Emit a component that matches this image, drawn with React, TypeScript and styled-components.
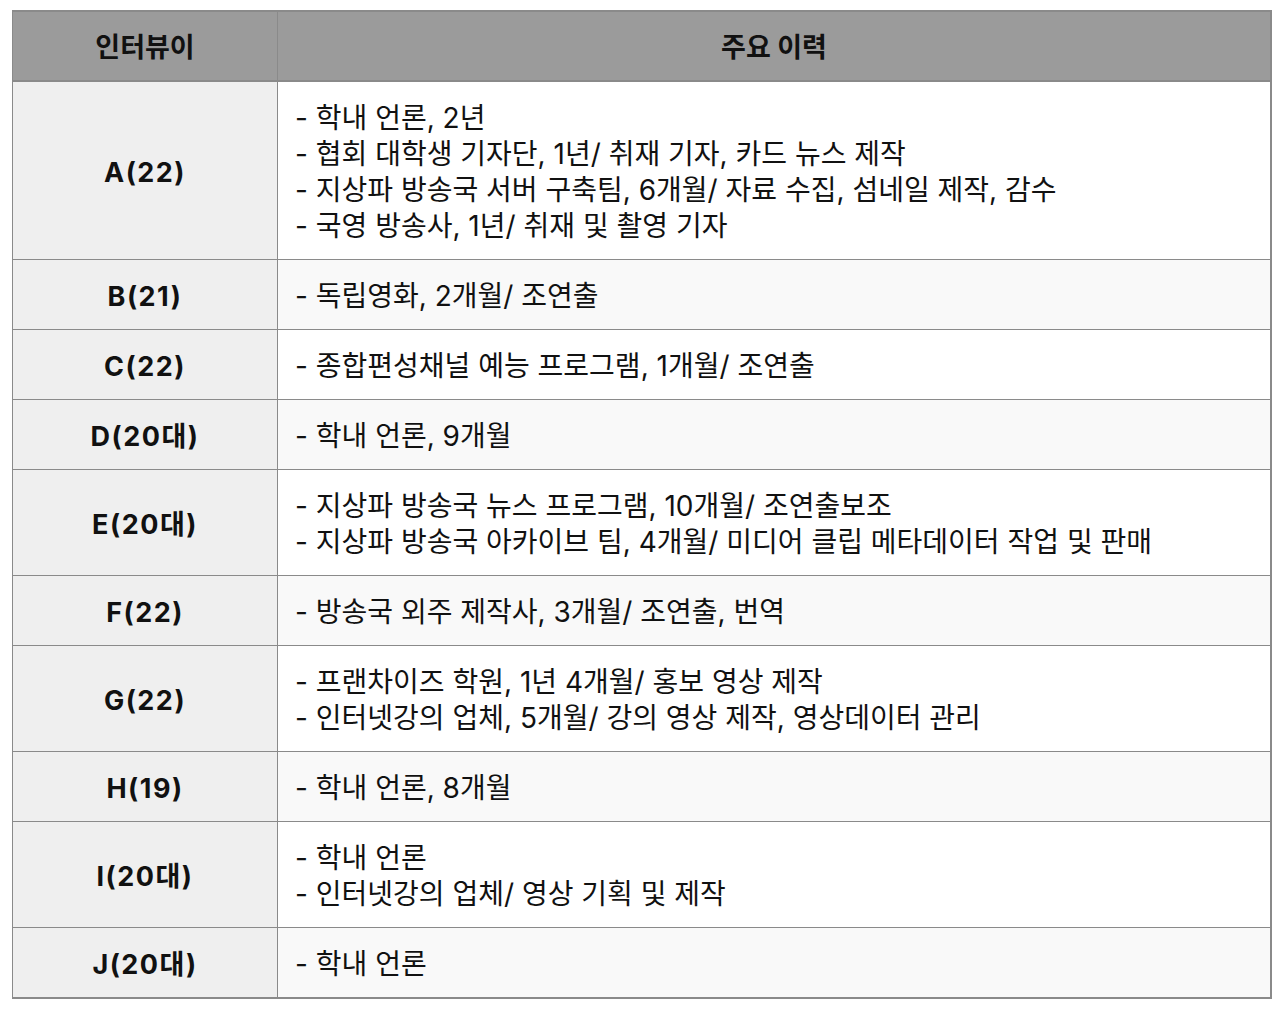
import React from "react";
import styled, { createGlobalStyle } from "styled-components";

const GlobalStyle = createGlobalStyle`
  html, body {
    margin: 0;
    padding: 0;
    background: #ffffff;
  }
  body {
    font-family: "Inter", "Noto Sans CJK KR", "Noto Sans", sans-serif;
    color: #111111;
  }
`;

interface Interviewee {
  id: string;
  history: string[];
}

const interviewees: Interviewee[] = [
  {
    id: "A(22)",
    history: [
      "- 학내 언론, 2년",
      "- 협회 대학생 기자단, 1년/ 취재 기자, 카드 뉴스 제작",
      "- 지상파 방송국 서버 구축팀, 6개월/ 자료 수집, 섬네일 제작, 감수",
      "- 국영 방송사, 1년/ 취재 및 촬영 기자",
    ],
  },
  { id: "B(21)", history: ["- 독립영화, 2개월/ 조연출"] },
  { id: "C(22)", history: ["- 종합편성채널 예능 프로그램, 1개월/ 조연출"] },
  { id: "D(20대)", history: ["- 학내 언론, 9개월"] },
  {
    id: "E(20대)",
    history: [
      "- 지상파 방송국 뉴스 프로그램, 10개월/ 조연출보조",
      "- 지상파 방송국 아카이브 팀, 4개월/ 미디어 클립 메타데이터 작업 및 판매",
    ],
  },
  { id: "F(22)", history: ["- 방송국 외주 제작사, 3개월/ 조연출, 번역"] },
  {
    id: "G(22)",
    history: [
      "- 프랜차이즈 학원, 1년 4개월/ 홍보 영상 제작",
      "- 인터넷강의 업체, 5개월/ 강의 영상 제작, 영상데이터 관리",
    ],
  },
  { id: "H(19)", history: ["- 학내 언론, 8개월"] },
  {
    id: "I(20대)",
    history: ["- 학내 언론", "- 인터넷강의 업체/ 영상 기획 및 제작"],
  },
  { id: "J(20대)", history: ["- 학내 언론"] },
];

const Page = styled.div`
  padding: 10px 8px 0 12px;
`;

const Table = styled.table`
  width: 1260px;
  border-collapse: collapse;
  border-top: 2px solid #8a8a8a;
  border-left: 1px solid #8a8a8a;
  border-right: 2px solid #8a8a8a;
  border-bottom: 2px solid #8a8a8a;
  font-size: 28px;
  line-height: 36px;
`;

const HeadCell = styled.th<{ $wide?: boolean }>`
  width: ${(p) => (p.$wide ? "auto" : "264px")};
  height: 64px;
  padding: 4px 0 0;
  box-sizing: content-box;
  background: #9b9b9b;
  border-right: 1px solid #8a8a8a;
  border-bottom: 2px solid #8a8a8a;
  font-size: 27px;
  font-weight: 700;
  text-align: center;
  vertical-align: middle;
  color: #111111;
`;

const Row = styled.tr`
  border-bottom: 1px solid #8a8a8a;
`;

const NameCell = styled.td`
  width: 264px;
  padding: 19px 0 14px;
  background: #efefef;
  border-right: 1px solid #8a8a8a;
  font-size: 27px;
  font-weight: 700;
  letter-spacing: 1.5px;
  text-align: center;
  vertical-align: middle;
`;

const HistoryCell = styled.td<{ $shaded: boolean }>`
  padding: 18px 18px 15px 17px;
  background: ${(p) => (p.$shaded ? "#f9f9f9" : "#ffffff")};
  vertical-align: middle;
`;

const Line = styled.div`
  white-space: nowrap;
`;

export default function App() {
  return (
    <>
      <GlobalStyle />
      <Page>
        <Table>
          <thead>
            <tr>
              <HeadCell>인터뷰이</HeadCell>
              <HeadCell $wide>주요 이력</HeadCell>
            </tr>
          </thead>
          <tbody>
            {interviewees.map((person, i) => (
              <Row key={person.id}>
                <NameCell>{person.id}</NameCell>
                <HistoryCell $shaded={i % 2 === 1}>
                  {person.history.map((line) => (
                    <Line key={line}>{line}</Line>
                  ))}
                </HistoryCell>
              </Row>
            ))}
          </tbody>
        </Table>
      </Page>
    </>
  );
}
